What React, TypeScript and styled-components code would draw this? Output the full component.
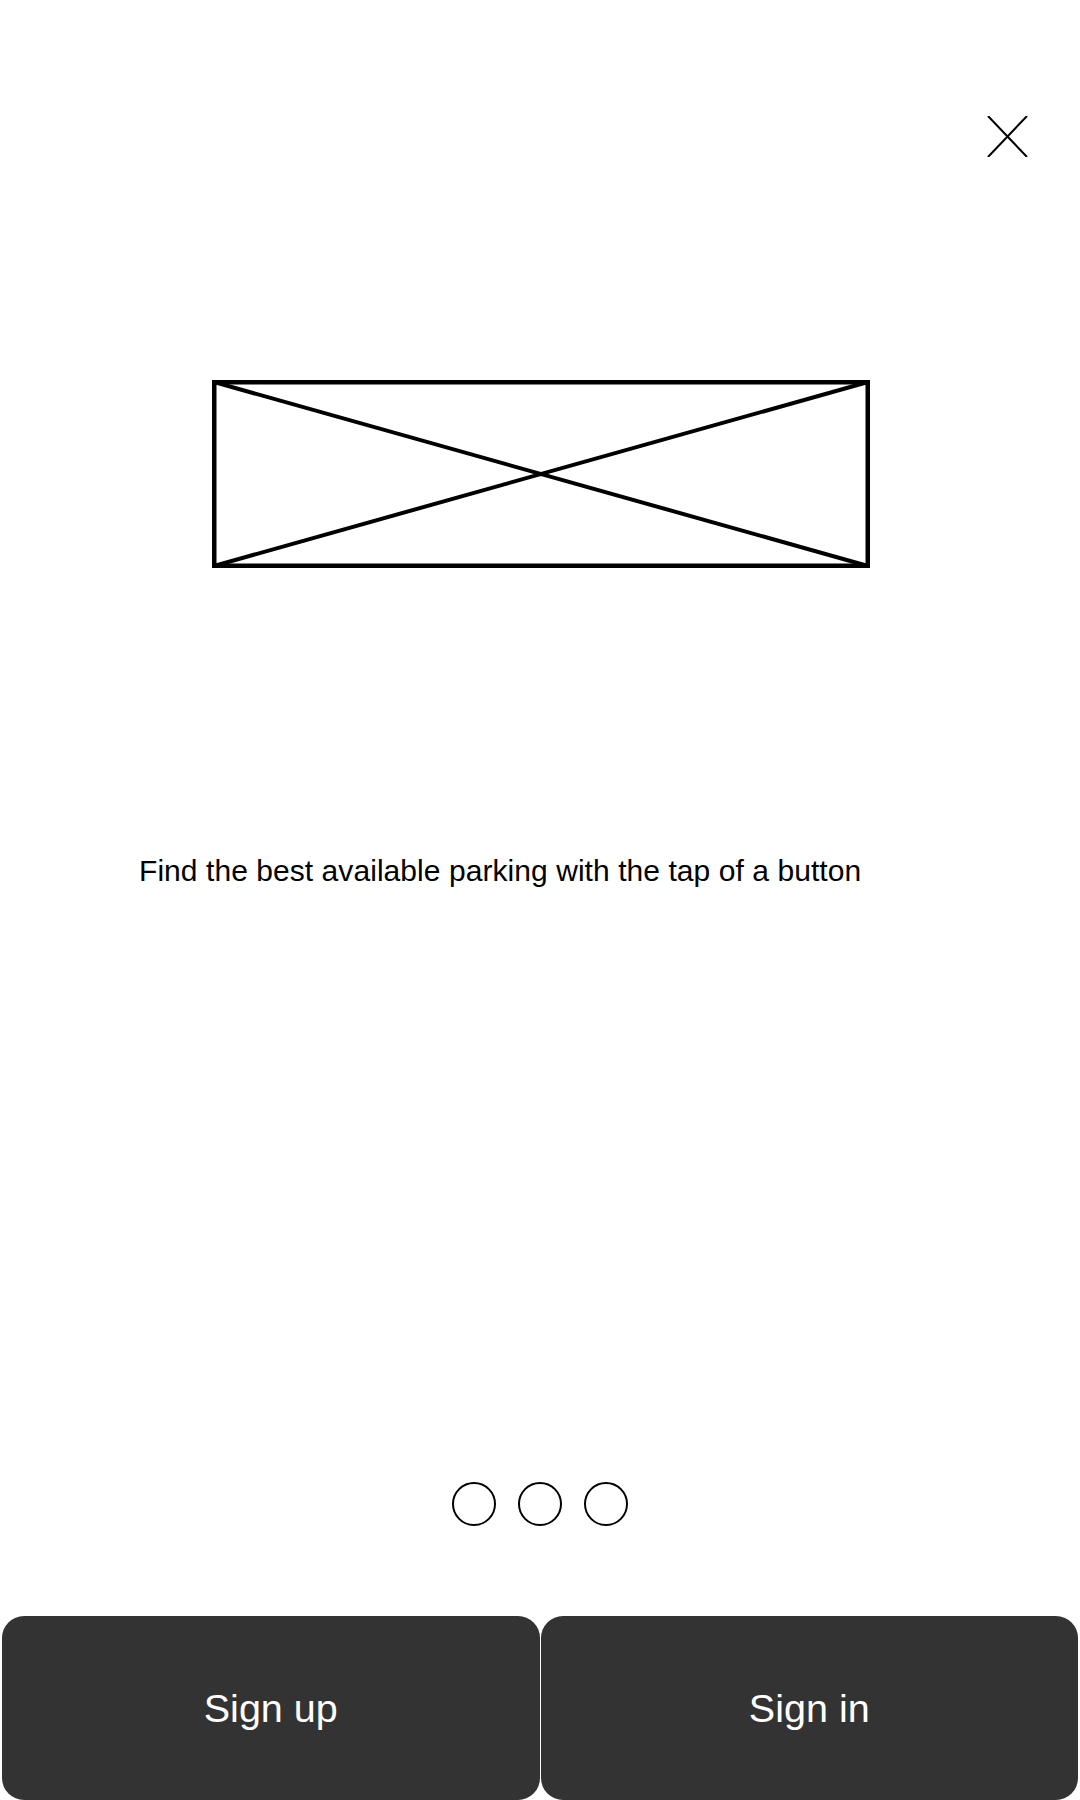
import React from 'react';
import styled, { createGlobalStyle } from 'styled-components';

const GlobalStyle = createGlobalStyle`
    html, body {
        margin: 0;
        padding: 0;
        background: #ffffff;
    }
    body {
        font-family: 'Liberation Sans', Arial, sans-serif;
    }
    * {
        box-sizing: border-box;
    }
`;

const Screen = styled.div`
    width: 1080px;
    height: 1800px;
    display: flex;
    flex-direction: column;
    background: #ffffff;
    overflow: hidden;
`;

const TopBar = styled.header`
    display: flex;
    justify-content: flex-end;
    padding: 116px 52px 0 0;
`;

const CloseButton = styled.button`
    width: 41px;
    height: 41px;
    padding: 0;
    border: none;
    background: none;
    cursor: pointer;
    display: block;
`;

const Hero = styled.div`
    align-self: center;
    margin: 223px 0 0 2px;
    width: 658px;
    height: 188px;
    svg {
        display: block;
    }
`;

const Tagline = styled.p`
    margin: 286px 0 0;
    padding-left: 139px;
    font-size: 30px;
    letter-spacing: 0.06px;
    line-height: 34px;
    color: #000000;
`;

const Spacer = styled.div`
    flex: 1;
`;

const Dots = styled.div`
    display: flex;
    justify-content: center;
    gap: 22px;
`;

const Dot = styled.span<{ $active?: boolean }>`
    width: 44px;
    height: 44px;
    border-radius: 50%;
    border: 2.5px solid #000000;
    background: ${(p) => (p.$active ? '#000000' : 'transparent')};
`;

const Actions = styled.div`
    margin-top: 90px;
    display: grid;
    grid-template-columns: 1fr 1fr;
    gap: 1px;
    padding: 0 2px;
    height: 184px;
`;

const ActionButton = styled.button`
    border: none;
    border-radius: 22px;
    background: #333333;
    color: #ffffff;
    font-family: 'Liberation Sans', Arial, sans-serif;
    font-size: 39.5px;
    cursor: pointer;
`;

const CloseIcon = () => (
    <svg width="41" height="41" viewBox="0 0 41 41">
        <path d="M1 0 L40 41 M40 0 L1 41" stroke="#000" strokeWidth="2" fill="none" />
    </svg>
);

const Placeholder = () => (
    <svg width="658" height="188" viewBox="0 0 658 188">
        <rect x="2.25" y="2.25" width="653.5" height="183.5" fill="none" stroke="#000" strokeWidth="4.5" />
        <path d="M2 2 L656 186 M656 2 L2 186" stroke="#000" strokeWidth="4" fill="none" />
    </svg>
);

const App = () => {
    return (
        <>
            <GlobalStyle />
            <Screen>
                <TopBar>
                    <CloseButton aria-label="Close">
                        <CloseIcon />
                    </CloseButton>
                </TopBar>
                <Hero>
                    <Placeholder />
                </Hero>
                <Tagline>Find the best available parking with the tap of a button</Tagline>
                <Spacer />
                <Dots>
                    <Dot />
                    <Dot />
                    <Dot />
                </Dots>
                <Actions>
                    <ActionButton>Sign up</ActionButton>
                    <ActionButton>Sign in</ActionButton>
                </Actions>
            </Screen>
        </>
    );
};

export default App;
